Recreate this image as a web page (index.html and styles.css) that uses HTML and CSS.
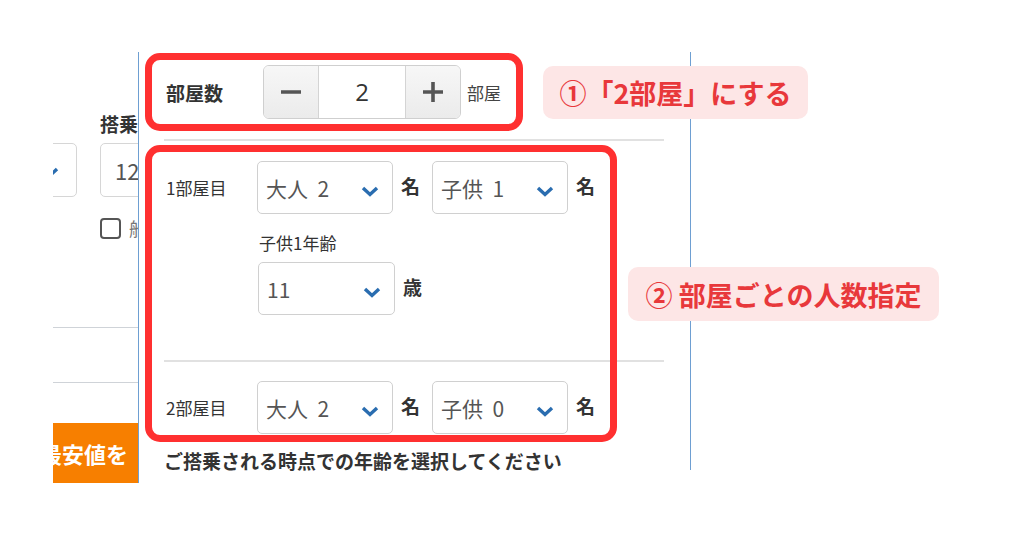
FILE: index.html
```html
<!DOCTYPE html>
<html>
	<head>
		<meta charset="UTF-8">
		<title>部屋数の指定</title>
		<link rel="stylesheet" href="styles.css">
	</head>
	<body>
		<div class="stage">
			<div class="shot">
				<aside class="side">
					<div class="side-fields">
						<div class="side-select">
							<svg class="chev" width="18" height="11" viewBox="0 0 18 11"><path d="M2 2 L9 8.5 L16 2" /></svg>
						</div>
						<div class="side-field">
							<div class="side-label">搭乗</div>
							<div class="side-input">12</div>
							<div class="side-check"><span class="box"></span>船</div>
						</div>
					</div>
					<hr class="side-rule">
					<hr class="side-rule second">
					<div class="side-btn">最安値を</div>
				</aside>

				<section class="panel">
					<div class="row count-row">
						<div class="row-label strong">部屋数</div>
						<div class="stepper">
							<span class="step">
								<svg width="20" height="20" viewBox="0 0 20 20"><path d="M0 10 H20" /></svg>
							</span>
							<span class="step-value">2</span>
							<span class="step">
								<svg width="20" height="20" viewBox="0 0 20 20"><path d="M0 10 H20 M10 0 V20" /></svg>
							</span>
						</div>
						<span class="unit">部屋</span>
					</div>

					<hr class="rule">

					<div class="row">
						<div class="row-label">1部屋目</div>
						<div class="select">大人&nbsp;&nbsp;2<svg class="chev" width="18" height="11" viewBox="0 0 18 11"><path d="M2 2 L9 8.5 L16 2" /></svg></div>
						<b class="suffix">名</b>
						<div class="select">子供&nbsp;&nbsp;1<svg class="chev" width="18" height="11" viewBox="0 0 18 11"><path d="M2 2 L9 8.5 L16 2" /></svg></div>
						<b class="suffix">名</b>
					</div>
					<div class="ages">
						<div class="age-label">子供1年齢</div>
						<div class="row">
							<div class="select age">11<svg class="chev" width="18" height="11" viewBox="0 0 18 11"><path d="M2 2 L9 8.5 L16 2" /></svg></div>
							<b class="suffix">歳</b>
						</div>
					</div>

					<hr class="rule low">

					<div class="row">
						<div class="row-label">2部屋目</div>
						<div class="select">大人&nbsp;&nbsp;2<svg class="chev" width="18" height="11" viewBox="0 0 18 11"><path d="M2 2 L9 8.5 L16 2" /></svg></div>
						<b class="suffix">名</b>
						<div class="select">子供&nbsp;&nbsp;0<svg class="chev" width="18" height="11" viewBox="0 0 18 11"><path d="M2 2 L9 8.5 L16 2" /></svg></div>
						<b class="suffix">名</b>
					</div>

					<p class="note">ご搭乗される時点での年齢を選択してください</p>
				</section>
			</div>

			<!-- 注釈 -->
			<div class="mark mark-count"></div>
			<div class="mark mark-rooms"></div>
			<div class="tag tag-count">①「2部屋」にする</div>
			<div class="tag tag-rooms">② 部屋ごとの人数指定</div>
		</div>
	</body>
</html>
```

FILE: styles.css
```css
html {
	box-sizing: border-box;
	font-family: "Noto Sans CJK JP", "Noto Sans", sans-serif;
}
*, *:before, *:after {
	box-sizing: inherit;
}

body {
	margin: 0;
	background: #fff;
	color: #333;
}

.stage {
	position: relative;
	width: 1024px;
	height: 538px;
	overflow: hidden;
}

.shot {
	display: flex;
	padding: 52px 0 0 53px;
}

/* 左側の切れた画面 */
.side {
	flex-shrink: 0;
	width: 86px;
	height: 431px;
	overflow: hidden;
	border-right: 1px solid #6e9fd2;
	padding-top: 60px;
}

.side-fields {
	display: flex;
	align-items: flex-start;
	width: 240px;
	margin-left: -56px;
}

.side-select {
	flex-shrink: 0;
	width: 80px;
	height: 54px;
	margin-top: 31px;
	border: 1px solid #d6d6d6;
	border-radius: 5px;
	display: flex;
	align-items: center;
	justify-content: flex-end;
	padding-right: 17px;
}

.side-field {
	flex-shrink: 0;
	margin-left: 23px;
	width: 120px;
}

.side-label {
	font-size: 19px;
	font-weight: bold;
	line-height: 24px;
	margin-bottom: 7px;
}

.side-input {
	height: 54px;
	border: 1px solid #d6d6d6;
	border-radius: 5px;
	font-size: 22px;
	line-height: 52px;
	padding-left: 14px;
	color: #555;
}

.side-check {
	display: flex;
	align-items: center;
	gap: 8px;
	margin-top: 18px;
	font-size: 18px;
	color: #777;
}

.side-check .box {
	width: 21px;
	height: 21px;
	border: 2px solid #555;
	border-radius: 4px;
}

.side-rule {
	margin: 86px 0 0;
	border: 0;
	border-top: 1px solid #cfd3d8;
}

.side-rule.second {
	margin-top: 54px;
}

.side-btn {
	margin: 40px 0 0;
	height: 62px;
	background: #f77f00;
	color: #fff;
	font-size: 22px;
	font-weight: bold;
	line-height: 60px;
	white-space: nowrap;
	text-indent: -13px;
}

/* 部屋数パネル */
.panel {
	flex-shrink: 0;
	width: 552px;
	height: 418px;
	border-right: 1px solid #6e9fd2;
	padding: 13px 26px 0 25px;
}

.row {
	display: flex;
	align-items: center;
}

.row-label {
	width: 93px;
	padding-left: 2px;
	font-size: 17px;
}

.row-label.strong {
	width: 99px;
	font-size: 19px;
	font-weight: bold;
}

.stepper {
	display: flex;
	height: 54px;
	width: 198px;
	border: 1px solid #cfcfcf;
	border-radius: 6px;
	overflow: hidden;
}

.step {
	width: 54px;
	display: flex;
	align-items: center;
	justify-content: center;
	background: linear-gradient(#f7f7f7, #ebebeb);
}

.step svg path {
	stroke: #555;
	stroke-width: 3.6;
	fill: none;
}

.step-value {
	flex: 1;
	border-left: 1px solid #d4d4d4;
	border-right: 1px solid #d4d4d4;
	text-align: center;
	font-size: 24px;
	line-height: 52px;
	color: #333;
	font-family: "Open Sans", "Noto Sans CJK JP", sans-serif;
}

.unit {
	margin-left: 6px;
	font-size: 17px;
	color: #444;
}

.rule {
	margin: 20px 0 20px;
	border: 0;
	border-top: 2px solid #e1e1e1;
}

.rule.low {
	margin: 45px 0 19px;
}

.select {
	display: flex;
	align-items: center;
	justify-content: space-between;
	width: 136px;
	height: 53px;
	padding: 0 13px 0 8px;
	border: 1px solid #d0d0d0;
	border-radius: 5px;
	font-size: 21px;
	color: #555;
}

.select.age {
	width: 137px;
}

.chev path {
	stroke: #2a6db0;
	stroke-width: 3.4;
	fill: none;
}

.select .chev {
	margin-top: 7px;
}

.side-select .chev {
	margin-top: 4px;
}

.suffix {
	margin: -4px 12px 0 8px;
	font-size: 19px;
}

.ages {
	margin-left: 94px;
}

.age-label {
	margin: 17px 0 7px 1px;
	font-size: 17px;
	line-height: 24px;
}

.note {
	margin: 14px 0 0;
	font-size: 19px;
	line-height: 26px;
	font-weight: bold;
	color: #333;
	white-space: nowrap;
}

/* 赤枠の注釈 */
.mark {
	position: absolute;
	border: 7px solid #ff3030;
	border-radius: 15px;
}

.mark-count {
	left: 145px;
	top: 53px;
	width: 378px;
	height: 78px;
}

.mark-rooms {
	left: 145px;
	top: 145px;
	width: 472px;
	height: 297px;
}

.tag {
	position: absolute;
	display: flex;
	align-items: center;
	justify-content: center;
	height: 53px;
	border-radius: 10px;
	background: #fde6e6;
	color: #e8383b;
	font-size: 27px;
	font-weight: bold;
	white-space: nowrap;
}

.tag-count {
	left: 543px;
	top: 66px;
	width: 265px;
}

.tag-rooms {
	left: 628px;
	top: 267px;
	width: 311px;
	height: 54px;
}
```
